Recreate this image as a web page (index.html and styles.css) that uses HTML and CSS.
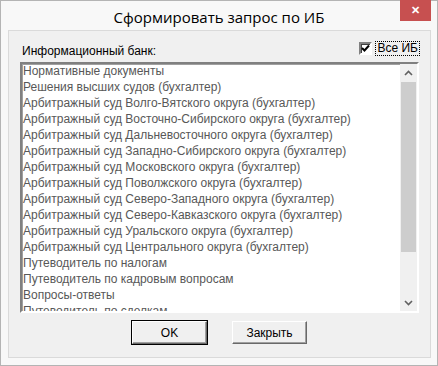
FILE: index.html
```html
<!DOCTYPE html>
<html lang="ru">
<head>
    <meta charset="UTF-8">
    <title>Сформировать запрос по ИБ</title>
    <link rel="stylesheet" href="styles.css">
</head>
<body>
    <div class="window">
        <div class="titlebar">
            <span class="title">Сформировать запрос по ИБ</span>
            <span class="close">&#x2715;</span>
        </div>

        <div class="client">
            <div class="head-row">
                <span class="label">Информационный банк:</span>
                <label class="check">
                    <span class="check-box">
                        <svg width="9" height="9" viewBox="0 0 9 9"><path d="M1 4 L3.5 6.5 L8 1.5" fill="none" stroke="#000" stroke-width="2"/></svg>
                    </span>
                    <span class="check-text">Все ИБ</span>
                </label>
            </div>

            <div class="listbox">
                <ul class="items">
                    <li>Нормативные документы</li>
                    <li>Решения высших судов (бухгалтер)</li>
                    <li>Арбитражный суд Волго-Вятского округа (бухгалтер)</li>
                    <li>Арбитражный суд Восточно-Сибирского округа (бухгалтер)</li>
                    <li>Арбитражный суд Дальневосточного округа (бухгалтер)</li>
                    <li>Арбитражный суд Западно-Сибирского округа (бухгалтер)</li>
                    <li>Арбитражный суд Московского округа (бухгалтер)</li>
                    <li>Арбитражный суд Поволжского округа (бухгалтер)</li>
                    <li>Арбитражный суд Северо-Западного округа (бухгалтер)</li>
                    <li>Арбитражный суд Северо-Кавказского округа (бухгалтер)</li>
                    <li>Арбитражный суд Уральского округа (бухгалтер)</li>
                    <li>Арбитражный суд Центрального округа (бухгалтер)</li>
                    <li>Путеводитель по налогам</li>
                    <li>Путеводитель по кадровым вопросам</li>
                    <li>Вопросы-ответы</li>
                    <li>Путеводитель по сделкам</li>
                </ul>
                <div class="scrollbar">
                    <div class="arrow">
                        <svg width="9" height="6" viewBox="0 0 9 6"><path d="M1 5 L4.5 1.5 L8 5" fill="none" stroke="#606060" stroke-width="1.6"/></svg>
                    </div>
                    <div class="track">
                        <div class="thumb"></div>
                    </div>
                    <div class="arrow">
                        <svg width="9" height="6" viewBox="0 0 9 6"><path d="M1 1 L4.5 4.5 L8 1" fill="none" stroke="#606060" stroke-width="1.6"/></svg>
                    </div>
                </div>
            </div>

            <div class="buttons">
                <button class="btn default">OK</button>
                <button class="btn">Закрыть</button>
            </div>
        </div>
    </div>
</body>
</html>
```

FILE: styles.css
```css
* {
    margin: 0;
    padding: 0;
    box-sizing: border-box;
}

body {
    font-family: "Liberation Sans", Arial, sans-serif;
    background: #ffffff;
}

.window {
    width: 438px;
    height: 366px;
    border: 1px solid #b4b4b4;
    background: #f8f8f8;
    display: flex;
    flex-direction: column;
}

.titlebar {
    height: 29px;
    display: flex;
    align-items: center;
    justify-content: center;
    position: relative;
}

.title {
    font-family: "Open Sans", "Noto Sans", sans-serif;
    font-size: 15px;
    color: #000;
    padding-top: 2px;
}

.close {
    position: absolute;
    top: -1px;
    right: 6px;
    width: 31px;
    height: 21px;
    background: #c75050;
    color: #fff;
    font-size: 11px;
    font-weight: bold;
    display: flex;
    align-items: center;
    justify-content: center;
}

.client {
    flex: 1;
    margin: 0 6px 7px 7px;
    border: 1px solid #dadada;
    background: #f0f0f0;
    padding: 10px 11px 0 11px;
    display: flex;
    flex-direction: column;
}

.head-row {
    height: 21px;
    display: flex;
    justify-content: space-between;
    align-items: flex-start;
    font-size: 12px;
    color: #000;
}

.label {
    padding-left: 2px;
    padding-top: 3px;
}

.check {
    display: flex;
    align-items: center;
    gap: 4px;
    padding-top: 1px;
}

.check-box {
    width: 13px;
    height: 13px;
    background: #fff;
    border: 2px solid;
    border-color: #808080 #fff #fff #808080;
    box-shadow: inset 1px 1px 0 #404040;
    display: flex;
    align-items: center;
    justify-content: center;
}

.check-text {
    outline: 1px dotted #000;
    padding: 0 1px;
    line-height: 13px;
}

.listbox {
    height: 251px;
    border: 2px solid;
    border-color: #808080 #fff #fff #808080;
    box-shadow: inset 1px 1px 0 #a0a0a0;
    background: #fff;
    display: flex;
    overflow: hidden;
}

.items {
    flex: 1;
    list-style: none;
    margin-top: -1px;
    overflow: hidden;
}

.items li {
    height: 16px;
    line-height: 16px;
    padding-left: 1px;
    font-size: 12px;
    color: #585858;
    white-space: nowrap;
}

.scrollbar {
    width: 17px;
    background: #f0f0f0;
    display: flex;
    flex-direction: column;
}

.arrow {
    height: 17px;
    display: flex;
    align-items: center;
    justify-content: center;
}

.track {
    flex: 1;
    padding: 0 1px;
}

.thumb {
    height: 170px;
    margin-top: 1px;
    background: #cdcdcd;
}

.buttons {
    display: flex;
    justify-content: center;
    gap: 25px;
    margin-top: 8px;
}

.btn {
    width: 75px;
    height: 23px;
    font-family: "Liberation Sans", Arial, sans-serif;
    font-size: 12px;
    color: #000;
    background: #f0f0f0;
    border: 1px solid;
    border-color: #fff #696969 #696969 #fff;
    box-shadow: inset -1px -1px 0 #a0a0a0;
}

.btn.default {
    outline: 1px solid #000;
    outline-offset: 0;
}
```
